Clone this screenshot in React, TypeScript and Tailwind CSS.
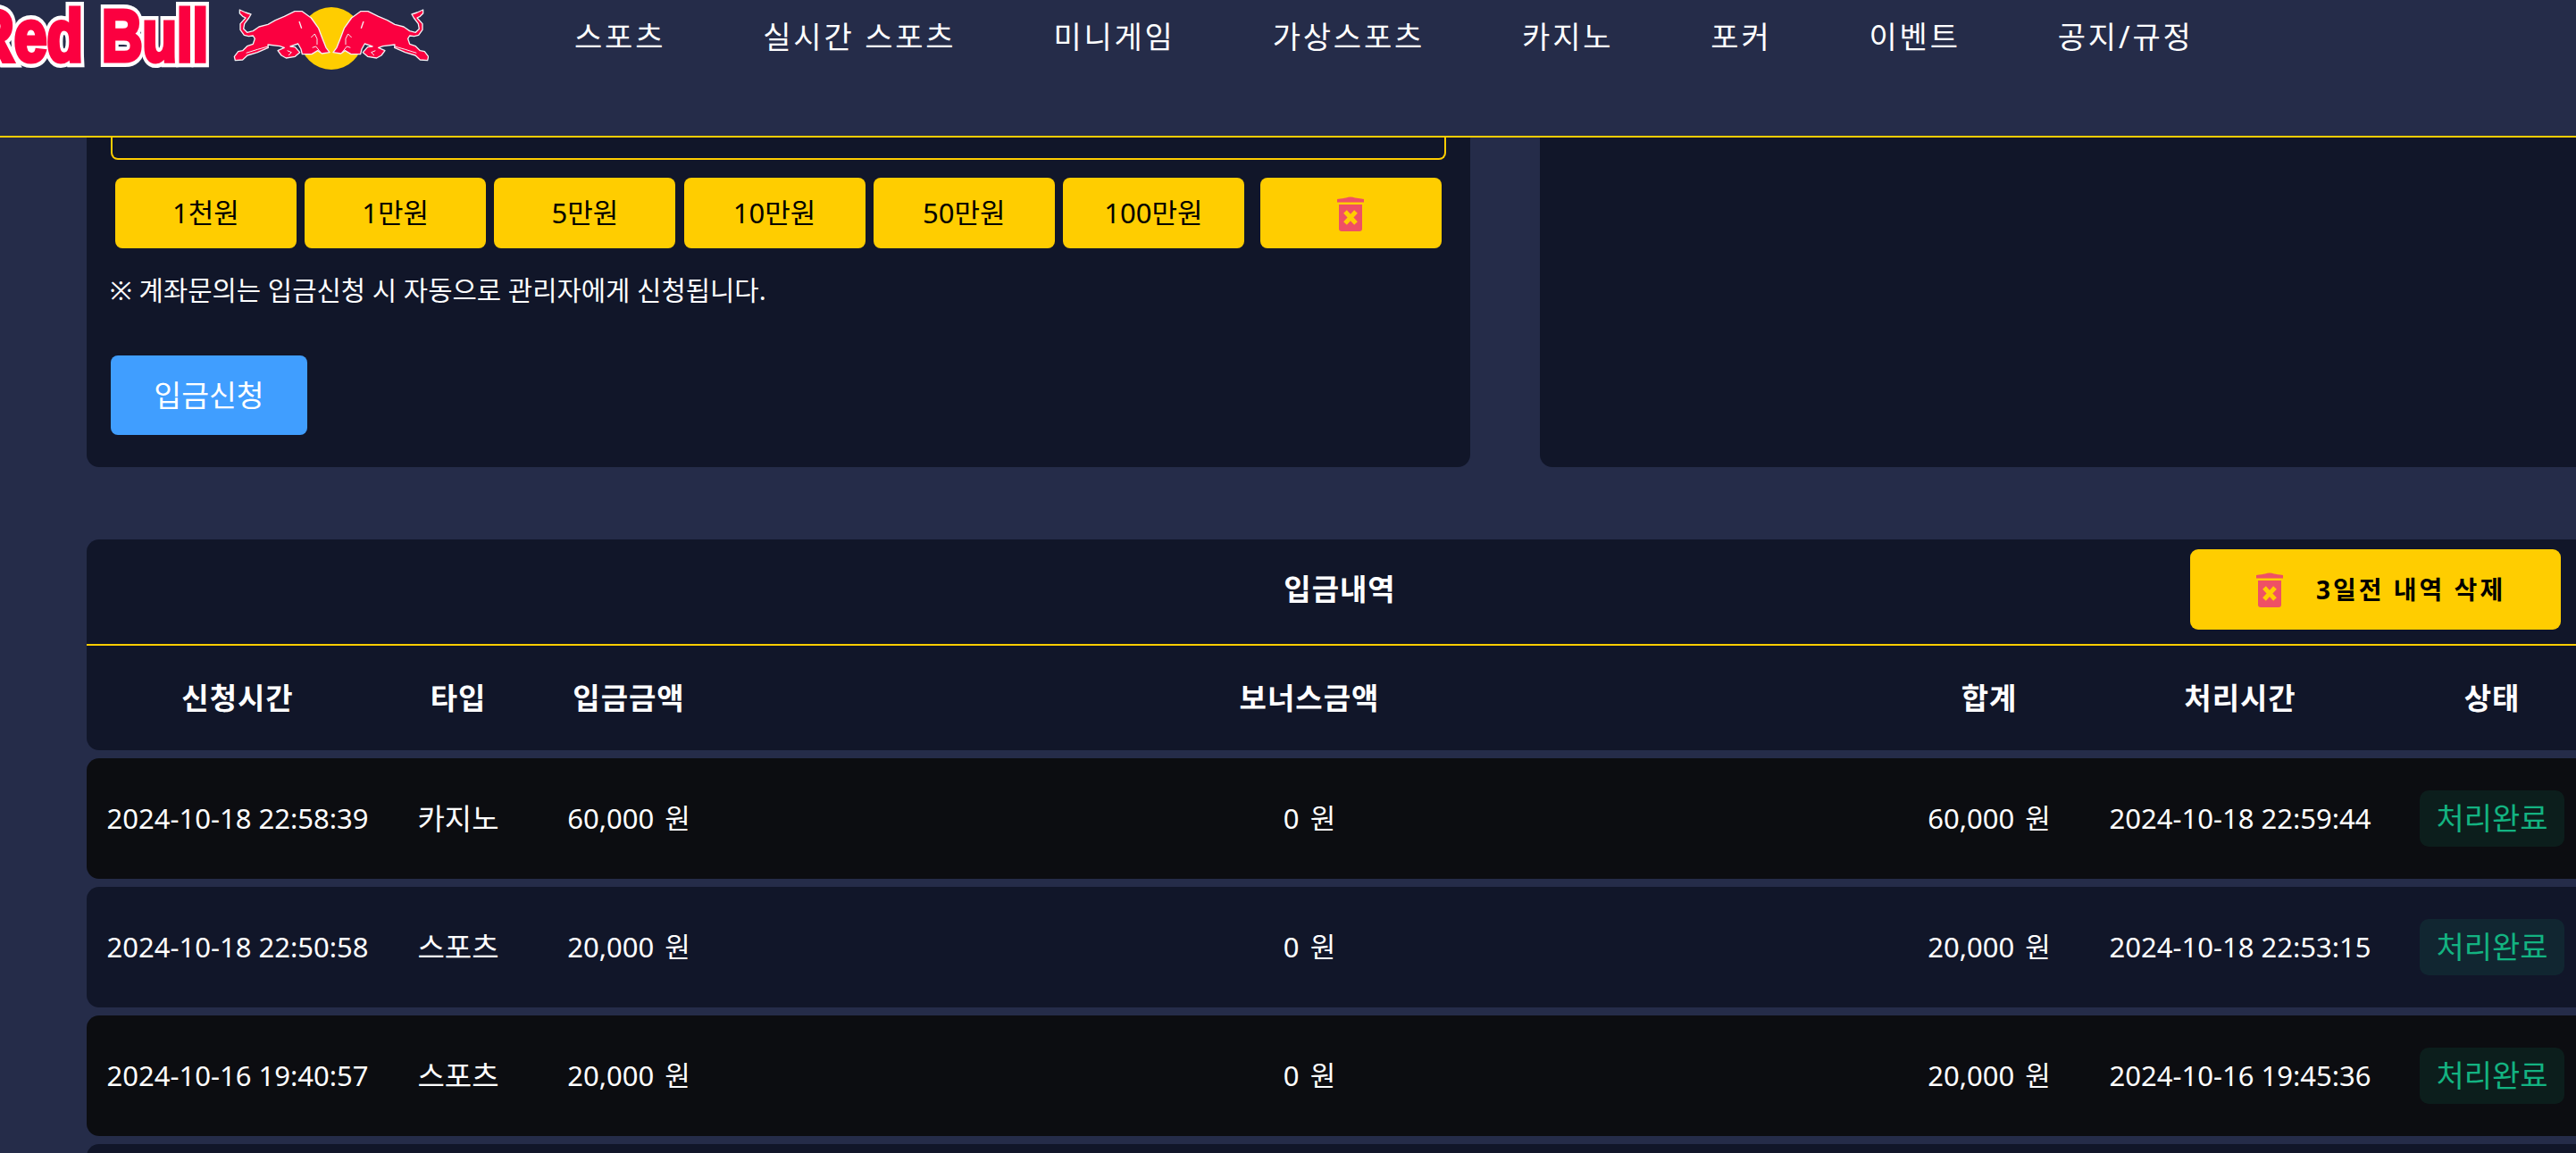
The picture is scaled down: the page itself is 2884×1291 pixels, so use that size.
import React from 'react';

const NAV = ['스포츠', '실시간 스포츠', '미니게임', '가상스포츠', '카지노', '포커', '이벤트', '공지/규정'];
const AMOUNTS = ['1천원', '1만원', '5만원', '10만원', '50만원', '100만원'];
const COLUMNS = ['신청시간', '타입', '입금금액', '보너스금액', '합계', '처리시간', '상태'];

const ROWS = [
  { requested: '2024-10-18 22:58:39', type: '카지노', amount: '60,000 원', bonus: '0 원', total: '60,000 원', done: '2024-10-18 22:59:44' },
  { requested: '2024-10-18 22:50:58', type: '스포츠', amount: '20,000 원', bonus: '0 원', total: '20,000 원', done: '2024-10-18 22:53:15' },
  { requested: '2024-10-16 19:40:57', type: '스포츠', amount: '20,000 원', bonus: '0 원', total: '20,000 원', done: '2024-10-16 19:45:36' },
];

const GRID = 'grid grid-cols-[338px_156px_226px_1298px_224px_338px_226px] items-center text-center';

const BULL =
  'M40 33 L60 42 L78 48 L71 60 L56 80 L53 97 L65 109 L85 104 L105 90 L135 82 L160 68 L190 55 L225 38 L250 38 L280 60 L305 95 L318 130 L330 160 L342 176 L316 180 L302 170 L282 182 L250 182 L246 165 L236 147 L210 156 L226 158 L242 176 L226 190 L196 195 L180 186 L168 170 L190 160 L175 155 L135 150 L136 160 L100 176 L66 186 L50 201 L25 203 L22 190 L35 173 L50 170 L65 155 L85 148 L91 130 L85 120 L70 122 L55 118 L42 100 L42 80 L60 60 L50 55 L40 45 Z';

function Bull() {
  return (
    <g>
      <path d={BULL} fill="#fb0040" stroke="#f4f1f4" strokeWidth="4" strokeLinejoin="round" />
      <path d="M240 72 L248 95" stroke="#f4f1f4" strokeWidth="4" fill="none" />
      <path d="M280 126 L292 114 L300 130 L300 150 M284 160 L296 156 L312 176" stroke="#f4f1f4" strokeWidth="3" fill="none" />
      <path d="M62 178 L100 166 L135 156 M200 170 L214 176 L204 186" stroke="#f4f1f4" strokeWidth="3" fill="none" />
    </g>
  );
}

function Logo() {
  return (
    <svg width="480" height="80" viewBox="0 0 480 80" className="shrink-0 block">
      <g fontFamily="'Liberation Sans', sans-serif" fontWeight="700" fontSize="82">
        <text x="-32" y="68" textLength="125" lengthAdjust="spacingAndGlyphs" fill="#fff" stroke="#fff" strokeWidth="14" strokeLinejoin="miter">Red</text>
        <text x="114" y="68" textLength="119" lengthAdjust="spacingAndGlyphs" fill="#fff" stroke="#fff" strokeWidth="14" strokeLinejoin="miter">Bull</text>
        <text x="-32" y="68" textLength="125" lengthAdjust="spacingAndGlyphs" fill="#fb0040" stroke="#fb0040" strokeWidth="5">Red</text>
        <text x="114" y="68" textLength="119" lengthAdjust="spacingAndGlyphs" fill="#fb0040" stroke="#fb0040" strokeWidth="5">Bull</text>
      </g>
      <circle cx="371" cy="43" r="35" fill="#ffcd00" />
      <g transform="translate(255 0) scale(0.3333)">
        <Bull />
        <g transform="translate(696 0) scale(-1 1)">
          <Bull />
        </g>
      </g>
    </svg>
  );
}

function TrashIcon() {
  return (
    <svg width="32" height="40" viewBox="0 0 32 40" className="shrink-0">
      <path d="M1 4 Q8 3 11 2.5 Q16 0.5 21 2.5 Q24 3 31 4 L31 7.5 L1 7.5 Z" fill="#ef5065" />
      <path d="M3 10 H29 V37 Q29 40 26 40 H6 Q3 40 3 37 Z" fill="#ef5065" />
      <path d="M10 18 L22 31 M22 18 L10 31" stroke="#ffcd00" strokeWidth="5" />
    </svg>
  );
}

export default function App() {
  return (
    <div className="h-[1291px] w-full overflow-hidden bg-[#252c49] text-white font-['Noto_Sans','Noto_Sans_CJK_KR',sans-serif]">
      <header className="flex h-[154px] items-start border-b-2 border-[#ffcd00]">
        <Logo />
        <nav className="ml-[163px] flex h-[82px] items-center gap-[109px] text-[34px] tracking-[2.8px]">
          {NAV.map((item) => (
            <a key={item} className="whitespace-nowrap">{item}</a>
          ))}
        </nav>
      </header>

      <div className="flex gap-[78px] pl-[97px]">
        <section className="h-[369px] w-[1549px] shrink-0 rounded-b-[14px] bg-[#111629]">
          <div className="ml-[27px] h-[25px] w-[1495px] rounded-b-lg border-x-2 border-b-2 border-[#ffcd00]" />
          <div className="ml-[32px] mt-[20px] flex gap-[9.2px]">
            {AMOUNTS.map((amount) => (
              <button key={amount} className="flex h-[79px] w-[203px] items-center justify-center rounded-[8px] bg-[#ffcd00] text-[31px] text-black">
                {amount}
              </button>
            ))}
            <button className="ml-[8.8px] flex h-[79px] w-[203px] items-center justify-center rounded-[8px] bg-[#ffcd00]">
              <TrashIcon />
            </button>
          </div>
          <p className="ml-[26px] mt-[25px] text-[29.7px] leading-[44px]">※ 계좌문의는 입금신청 시 자동으로 관리자에게 신청됩니다.</p>
          <button className="ml-[27px] mt-[51px] h-[89px] w-[220px] rounded-[8px] bg-[#409eff] text-[33.5px]">입금신청</button>
        </section>
        <section className="h-[369px] flex-1 rounded-bl-[14px] bg-[#111629]" />
      </div>

      <section className="ml-[97px] mt-[81px] w-[2806px]">
        <div className="flex h-[119px] items-center rounded-t-[14px] border-b-2 border-[#ffcd00] bg-[#111629] pb-[5px] pr-[36px]">
          <h2 className="flex-1 pl-[451px] text-center text-[33px] font-bold tracking-[1px]">입금내역</h2>
          <button className="flex h-[90px] w-[415px] items-center gap-[36px] rounded-[9px] bg-[#ffcd00] pl-[73px] text-[28px] font-bold tracking-[3px] text-black">
            <TrashIcon />
            3일전 내역 삭제
          </button>
        </div>
        <div className={`${GRID} h-[117px] rounded-b-[14px] bg-[#111629] text-[33px] font-bold tracking-[1px]`}>
          {COLUMNS.map((col) => (
            <div key={col}>{col}</div>
          ))}
        </div>
        <div className="mt-[9px] flex flex-col gap-[9px]">
          {ROWS.map((row, i) => (
            <div key={row.requested} className={`${GRID} h-[135px] rounded-[14px] text-[31px] [word-spacing:4px] ${i % 2 === 0 ? 'bg-[#0c0d11]' : 'bg-[#111629]'}`}>
              <div className="[word-spacing:0px]">{row.requested}</div>
              <div className="text-[33px]">{row.type}</div>
              <div>{row.amount}</div>
              <div>{row.bonus}</div>
              <div>{row.total}</div>
              <div className="[word-spacing:0px]">{row.done}</div>
              <div className="flex justify-center">
                <span className="flex h-[63px] w-[162px] items-center justify-center rounded-[10px] bg-[#10b9811a] text-[34px] text-[#13b381]">처리완료</span>
              </div>
            </div>
          ))}
          <div className="h-[135px] rounded-[14px] bg-[#111629]" />
        </div>
      </section>
    </div>
  );
}
